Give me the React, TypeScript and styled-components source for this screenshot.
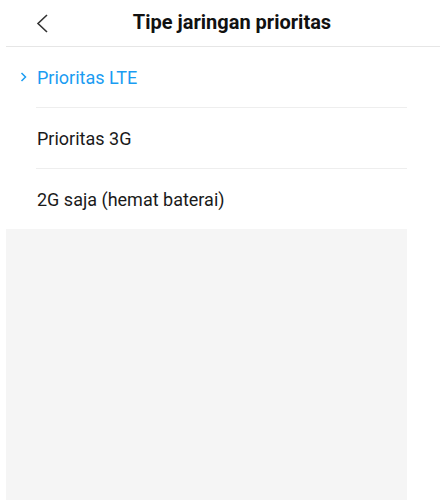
import styled, { createGlobalStyle } from "styled-components";

const GlobalStyle = createGlobalStyle`
  html, body {
    margin: 0;
    padding: 0;
    background: #ffffff;
    font-family: Roboto, "Noto Sans", sans-serif;
  }
`;

const Screen = styled.div`
  width: 440px;
  height: 500px;
  overflow: hidden;
  display: flex;
  flex-direction: column;
  background: #ffffff;
`;

const Header = styled.div`
  height: 46px;
  margin-left: 6px;
  border-bottom: 1px solid #e6e6e6;
  display: grid;
  grid-template-columns: 60px 1fr 42px;
  align-items: center;
`;

const BackButton = styled.div`
  display: flex;
  align-items: center;
  padding-left: 30px;
  height: 100%;
`;

const Title = styled.h1`
  margin: 0 0 2px;
  text-align: center;
  font-size: 20px;
  font-weight: 700;
  color: #111111;
`;

const List = styled.div`
  width: 401px;
  margin-left: 6px;
  display: flex;
  flex-direction: column;
`;

const Item = styled.div<{ $active?: boolean }>`
  height: 60px;
  display: flex;
  align-items: center;
  position: relative;
  padding-left: 31px;
  font-size: 18px;
  color: ${(p) => (p.$active ? "#1a9cf2" : "#1a1a1a")};
`;

const Divider = styled.div`
  margin-left: 30px;
  border-top: 1px solid #eeeeee;
`;

const Marker = styled.svg`
  position: absolute;
  left: 14px;
  top: 25px;
`;

const Filler = styled.div`
  flex: 1;
  width: 401px;
  margin-left: 6px;
  background: #f5f5f5;
`;

const items = ["Prioritas LTE", "Prioritas 3G", "2G saja (hemat baterai)"];

export default function App() {
  return (
    <Screen>
      <GlobalStyle />
      <Header>
        <BackButton>
          <svg width="12" height="19" viewBox="0 0 12 19" fill="none">
            <path d="M11 1L2 9.5L11 18" stroke="#333333" strokeWidth="1.6" />
          </svg>
        </BackButton>
        <Title>Tipe jaringan prioritas</Title>
        <div />
      </Header>
      <List>
        {items.map((label, i) => (
          <div key={label}>
            {i > 0 && <Divider />}
            <Item $active={i === 0}>
              {i === 0 && (
                <Marker width="7" height="10" viewBox="0 0 7 10" fill="none">
                  <path d="M1.5 1L5.5 5L1.5 9" stroke="#1a9cf2" strokeWidth="1.5" />
                </Marker>
              )}
              {label}
            </Item>
          </div>
        ))}
      </List>
      <Filler />
    </Screen>
  );
}
